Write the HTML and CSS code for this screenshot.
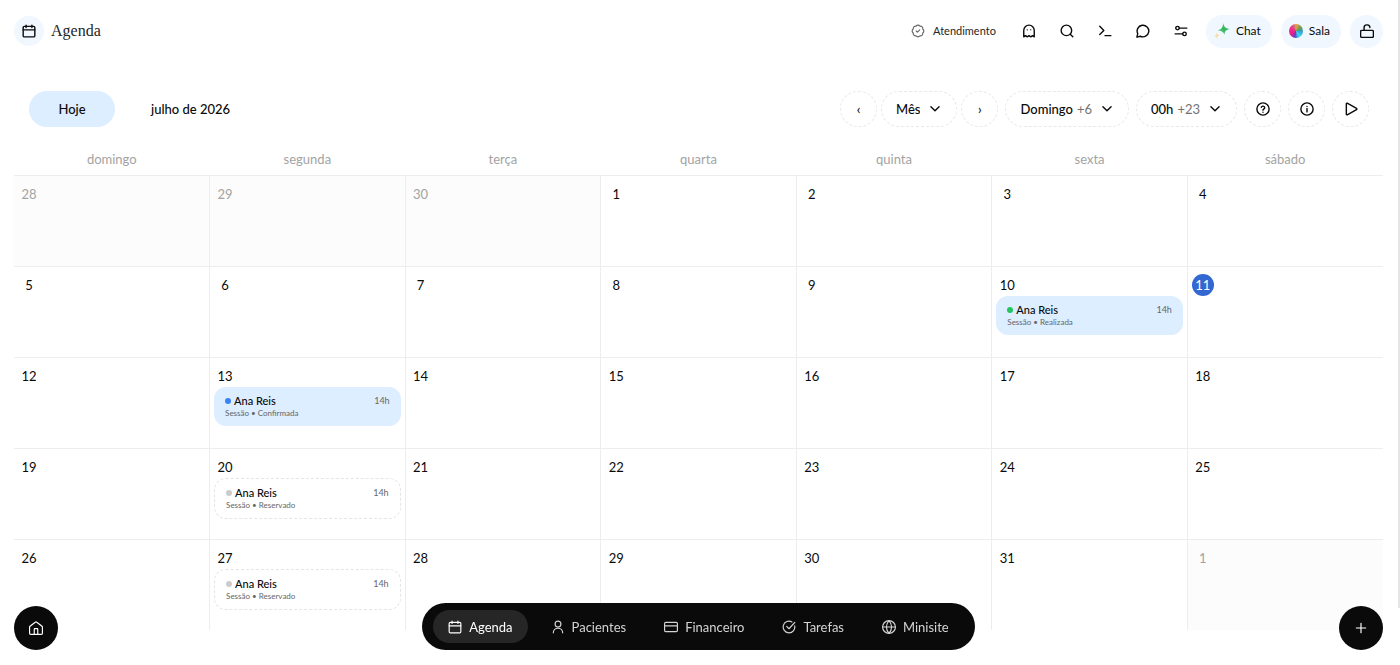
FILE: index.html
```html
<!DOCTYPE html>
<html lang="pt-BR">
<head>
    <meta charset="utf-8">
    <meta name="viewport" content="width=device-width, initial-scale=1">
    <title>Agenda</title>
    <link rel="stylesheet" href="styles.css">
</head>

<body>
<!-- shared icons -->
<svg class="sprite" aria-hidden="true">
    <symbol id="i-calendar" viewBox="0 0 24 24"><rect x="2" y="4" width="20" height="18" rx="2"/><path d="M7 2v4M17 2v4M2 10h20"/></symbol>
    <symbol id="i-down" viewBox="0 0 24 24"><path d="m5 8 7 7 7-7"/></symbol>
</svg>

<header class="topbar">
    <div class="brand">
        <span class="brand-icon"><svg class="icon"><use href="#i-calendar"/></svg></span>
        <h1>Agenda</h1>
    </div>
    <div class="actions">
        <a class="status" href="#">
            <svg class="icon" viewBox="0 0 24 24"><path d="M3.85 8.62a4 4 0 0 1 4.78-4.77 4 4 0 0 1 6.74 0 4 4 0 0 1 4.78 4.78 4 4 0 0 1 0 6.74 4 4 0 0 1-4.77 4.78 4 4 0 0 1-6.75 0 4 4 0 0 1-4.78-4.77 4 4 0 0 1 0-6.76Z"/><path d="m9 12 2 2 4-4"/></svg>
            Atendimento
        </a>
        <div class="tools">
            <button type="button" aria-label="Fantasma"><svg class="icon" viewBox="0 0 24 24"><path d="M9 10h.01M15 10h.01M12 2a9 9 0 0 0-9 9v11l3-2 3 2 3-2 3 2 3-2 3 2V11a9 9 0 0 0-9-9z"/></svg></button>
            <button type="button" aria-label="Buscar"><svg class="icon" viewBox="0 0 24 24"><circle cx="11" cy="11" r="9"/><path d="m22 22-4.500-4.500"/></svg></button>
            <button type="button" aria-label="Comandos"><svg class="icon" viewBox="0 0 24 24"><path d="m3 18 7-7-7-7M12 20h10"/></svg></button>
            <button type="button" aria-label="Mensagens"><svg class="icon" viewBox="0 0 24 24"><path d="M7.500 21A10 10 0 1 0 3 16.500L1.500 22.500Z"/></svg></button>
            <button type="button" aria-label="Ajustes"><svg class="icon" viewBox="0 0 24 24"><circle cx="6" cy="7" r="3"/><path d="M9 7h13M2 17h13"/><circle cx="18" cy="17" r="3"/></svg></button>
        </div>
        <div class="pills">
            <button type="button" class="pill">
                <svg class="spark" viewBox="0 0 24 24">
                    <defs><linearGradient id="leaf" x1="0" y1="1" x2="1" y2="0"><stop offset="0" stop-color="#7bd6a4"/><stop offset=".5" stop-color="#35b558"/><stop offset="1" stop-color="#5cc8b4"/></linearGradient></defs>
                    <path fill="url(#leaf)" d="M14 0c1 6 3 8 10 9-6 1-8 3-8 9-2-5-5-6-11-7 6-1 8-4 9-11z"/>
                    <path fill="#fbdca0" d="M4 14c0 3 2 4 5 4-3 1-4 2-4 6-1-3-2-4-5-4 3-1 4-3 4-6z"/>
                </svg>
                Chat
            </button>
            <button type="button" class="pill"><span class="orb"></span>Sala</button>
            <button type="button" class="pill lock" aria-label="Bloquear"><svg class="icon" viewBox="0 0 24 24"><rect x="1" y="11" width="22" height="12" rx="2"/><path d="M7 11V7a5 5 0 0 1 10-1"/></svg></button>
        </div>
    </div>
</header>

<main>
    <div class="toolbar">
        <button type="button" class="today-btn">Hoje</button>
        <h2>julho de 2026</h2>
        <div class="filters">
            <div class="period">
                <button type="button" class="round" aria-label="Anterior">‹</button>
                <label class="dropdown">
                    <select aria-label="Visualização"><option>Mês</option></select>
                    <svg class="icon"><use href="#i-down"/></svg>
                </label>
                <button type="button" class="round" aria-label="Próximo">›</button>
            </div>
            <label class="dropdown">
                <select aria-label="Dias"><option>Domingo</option></select>
                <span class="more">+6</span>
                <svg class="icon"><use href="#i-down"/></svg>
            </label>
            <label class="dropdown">
                <select aria-label="Horas"><option>00h</option></select>
                <span class="more">+23</span>
                <svg class="icon"><use href="#i-down"/></svg>
            </label>
            <button type="button" class="round" aria-label="Ajuda"><svg class="icon" viewBox="0 0 24 24"><circle cx="12" cy="12" r="10.500"/><path d="M9.100 9a3 3 0 0 1 5.800 1c0 2-3 2.500-3 4M12 17.500h.01"/></svg></button>
            <button type="button" class="round" aria-label="Informações"><svg class="icon" viewBox="0 0 24 24"><circle cx="12" cy="12" r="10.500"/><path d="M12 17v-6M12 7.500h.01"/></svg></button>
            <button type="button" class="round" aria-label="Iniciar"><svg class="icon" viewBox="0 0 24 24"><path d="M4 3v18a1 1 0 0 0 1.500.9l16-9a1 1 0 0 0 0-1.800l-16-9A1 1 0 0 0 4 3z"/></svg></button>
        </div>
    </div>

    <table class="calendar">
        <thead>
            <tr>
                <th>domingo</th><th>segunda</th><th>terça</th><th>quarta</th><th>quinta</th><th>sexta</th><th>sábado</th>
            </tr>
        </thead>
        <tbody>
            <tr>
                <td class="out"><span class="day">28</span></td>
                <td class="out"><span class="day">29</span></td>
                <td class="out"><span class="day">30</span></td>
                <td><span class="day">1</span></td>
                <td><span class="day">2</span></td>
                <td><span class="day">3</span></td>
                <td><span class="day">4</span></td>
            </tr>
            <tr>
                <td><span class="day">5</span></td>
                <td><span class="day">6</span></td>
                <td><span class="day">7</span></td>
                <td><span class="day">8</span></td>
                <td><span class="day">9</span></td>
                <td>
                    <span class="day">10</span>
                    <a class="event done" href="#">
                        <span class="row"><i class="dot"></i><b>Ana Reis</b><time>14h</time></span>
                        <small>Sessão • Realizada</small>
                    </a>
                </td>
                <td><span class="day today">11</span></td>
            </tr>
            <tr>
                <td><span class="day">12</span></td>
                <td>
                    <span class="day">13</span>
                    <a class="event confirmed" href="#">
                        <span class="row"><i class="dot"></i><b>Ana Reis</b><time>14h</time></span>
                        <small>Sessão • Confirmada</small>
                    </a>
                </td>
                <td><span class="day">14</span></td>
                <td><span class="day">15</span></td>
                <td><span class="day">16</span></td>
                <td><span class="day">17</span></td>
                <td><span class="day">18</span></td>
            </tr>
            <tr>
                <td><span class="day">19</span></td>
                <td>
                    <span class="day">20</span>
                    <a class="event reserved" href="#">
                        <span class="row"><i class="dot"></i><b>Ana Reis</b><time>14h</time></span>
                        <small>Sessão • Reservado</small>
                    </a>
                </td>
                <td><span class="day">21</span></td>
                <td><span class="day">22</span></td>
                <td><span class="day">23</span></td>
                <td><span class="day">24</span></td>
                <td><span class="day">25</span></td>
            </tr>
            <tr>
                <td><span class="day">26</span></td>
                <td>
                    <span class="day">27</span>
                    <a class="event reserved" href="#">
                        <span class="row"><i class="dot"></i><b>Ana Reis</b><time>14h</time></span>
                        <small>Sessão • Reservado</small>
                    </a>
                </td>
                <td><span class="day">28</span></td>
                <td><span class="day">29</span></td>
                <td><span class="day">30</span></td>
                <td><span class="day">31</span></td>
                <td class="out"><span class="day">1</span></td>
            </tr>
        </tbody>
    </table>
</main>

<div class="dock">
    <a class="fab" href="#" aria-label="Início"><svg class="icon" viewBox="0 0 24 24"><path d="M15 22v-8a1 1 0 0 0-1-1h-4a1 1 0 0 0-1 1v8"/><path d="M1 10.500a2 2 0 0 1 .7-1.500l9-7a2 2 0 0 1 2.600 0l9 7a2 2 0 0 1 .7 1.500V21a2 2 0 0 1-2 2H3a2 2 0 0 1-2-2z"/></svg></a>
    <nav>
        <a class="active" href="#"><svg class="icon"><use href="#i-calendar"/></svg>Agenda</a>
        <a href="#"><svg class="icon" viewBox="0 0 24 24"><circle cx="12" cy="7" r="5"/><path d="M20 22a8 8 0 0 0-16 0"/></svg>Pacientes</a>
        <a href="#"><svg class="icon" viewBox="0 0 24 24"><rect x="1" y="4" width="22" height="16" rx="2"/><path d="M1 10h22"/></svg>Financeiro</a>
        <a href="#"><svg class="icon" viewBox="0 0 24 24"><path d="M21.800 10A10 10 0 1 1 17 3.300"/><path d="m8 11 4 4L22 4"/></svg>Tarefas</a>
        <a href="#"><svg class="icon" viewBox="0 0 24 24"><circle cx="12" cy="12" r="11"/><path d="M12 1a16 16 0 0 0 0 22 16 16 0 0 0 0-22M1 12h22"/></svg>Minisite</a>
    </nav>
    <button type="button" class="fab" aria-label="Adicionar"><svg class="icon" viewBox="0 0 24 24"><path d="M4 12h16M12 4v16"/></svg></button>
</div>
<div class="scroll-thumb"></div>
</body>
</html>
```
FILE: styles.css
```css
* {
    box-sizing: border-box;
}

body {
    margin: 0;
    background: #fff;
    color: #0a0a0a;
    font-family: Lato, "Open Sans", sans-serif;
    font-size: 13px;
    line-height: 16px;
}

a {
    color: inherit;
    text-decoration: none;
}

button, select {
    margin: 0;
    padding: 0;
    border: 0;
    background: none;
    color: inherit;
    font: inherit;
    cursor: pointer;
}

.sprite {
    display: none;
}

.icon {
    flex: none;
    width: 14px;
    height: 14px;
    fill: none;
    stroke: currentColor;
    stroke-width: 2.4;
    stroke-linecap: round;
    stroke-linejoin: round;
}

/* top bar */
.topbar {
    display: flex;
    align-items: center;
    justify-content: space-between;
    height: 62px;
    padding: 0 17px 0 14px;
}

.brand {
    display: flex;
    align-items: center;
    gap: 7px;
}

.brand-icon {
    display: grid;
    place-items: center;
    width: 30px;
    height: 30px;
    border-radius: 50%;
    background: #f0f7ff;
}

h1 {
    margin: 0;
    font: 16px/24px "Liberation Serif", serif;
    color: #262626;
}

.actions, .status, .tools, .pills {
    display: flex;
    align-items: center;
}

.status {
    gap: 8px;
    margin-right: 20px;
    font-size: 11px;
    color: #262626;
}

.status .icon {
    color: #666;
    stroke-width: 2;
}

.tools {
    gap: 12px;
    margin-right: 12px;
}

.tools button {
    display: grid;
    place-items: center;
    width: 26px;
    height: 32px;
}

.pills {
    gap: 9px;
}

.pill {
    display: flex;
    align-items: center;
    gap: 6px;
    height: 33px;
    padding: 0 11px 0 8px;
    border-radius: 17px;
    background: #f0f7ff;
    font-size: 12px;
}

.pill.lock {
    justify-content: center;
    width: 33px;
    padding: 0;
}

.spark {
    width: 16px;
    height: 16px;
}

.orb {
    width: 14px;
    height: 14px;
    border-radius: 50%;
    background: conic-gradient(#e8a04a, #5a9c5a 60deg, #39a0d8 100deg, #38e0e8 150deg, #5a3fd0 190deg, #e0208a 230deg, #f02a8a 290deg, #d8558a 330deg, #e8a04a);
}

/* calendar toolbar */
.toolbar {
    display: flex;
    align-items: center;
    padding: 29px 31px 0 29px;
}

.today-btn {
    width: 86px;
    height: 36px;
    border-radius: 18px;
    background: #dceeff;
    font-weight: 500;
}

h2 {
    margin: 0 auto 0 36px;
    font-size: 13px;
    font-weight: 500;
}

.filters {
    display: flex;
    gap: 7px;
}

.period {
    display: flex;
    gap: 4px;
}

.round, .dropdown {
    display: flex;
    align-items: center;
    justify-content: center;
    height: 36px;
    border: 1px dashed #e8e8e8;
    border-radius: 18px;
    font-weight: 500;
}

.round {
    width: 37px;
}

.dropdown {
    padding: 0 14px;
}

.dropdown select {
    appearance: none;
    field-sizing: content;
}

.dropdown .icon {
    margin-left: 8px;
}

.more {
    margin-left: 4px;
    color: #737373;
    font-weight: 400;
}

/* month grid */
.calendar {
    width: calc(100% - 31px);
    margin: 16px 17px 33px 14px;
    border-collapse: collapse;
    table-layout: fixed;
}

.calendar th {
    height: 32px;
    padding: 0;
    color: #a3a3a3;
    font-weight: 400;
}

.calendar td {
    height: 91px;
    padding: 7px 4px 0;
    border-top: 1px solid #ededed;
    border-left: 1px solid #ededed;
    vertical-align: top;
}

.calendar td:first-child {
    border-left: 0;
}

.calendar .out {
    background: #fcfcfc;
    color: #a3a3a3;
}

.day {
    display: grid;
    place-items: center;
    width: 22px;
    height: 22px;
    border-radius: 50%;
}

.day.today {
    background: #3367d1;
    color: #fff;
}

.event {
    display: block;
    padding: 7px 11px;
    border-radius: 12px;
    background: #dceeff;
}

.event .row {
    display: flex;
    align-items: center;
    line-height: 14px;
}

.event b {
    margin-left: 3px;
    font-size: 11px;
    font-weight: 500;
}

.event time {
    margin-left: auto;
    color: #666;
    font-size: 9px;
}

.event small {
    display: block;
    color: #666;
    font-size: 8px;
    line-height: 11px;
}

.dot {
    width: 6px;
    height: 6px;
    border-radius: 50%;
}

.done .dot {
    background: #22c55e;
}

.confirmed .dot {
    background: #3b82f6;
}

.reserved .dot {
    background: #ccc;
}

.event.reserved {
    border: 1px dashed #e5e5e5;
    background: #fff;
}

/* floating navigation */
.dock {
    position: fixed;
    left: 14px;
    right: 17px;
    bottom: 15px;
    display: flex;
    align-items: flex-end;
    justify-content: space-between;
}

.fab {
    display: grid;
    place-items: center;
    width: 44px;
    height: 44px;
    border-radius: 50%;
    background: #0a0a0a;
    color: #fff;
}

.fab .icon {
    stroke-width: 2;
}

nav {
    display: flex;
    gap: 8px;
    padding: 7px 11px;
    border-radius: 24px;
    background: #0a0a0a;
    color: #d4d4d4;
}

nav a {
    display: flex;
    align-items: center;
    gap: 7px;
    height: 33px;
    padding: 0 15px;
    border-radius: 17px;
}

nav .active {
    background: #262626;
    color: #fff;
}

nav .icon {
    stroke-width: 2;
}

.scroll-thumb {
    position: fixed;
    top: 0;
    right: 0;
    width: 2px;
    height: 608px;
    background: #e5e5e5;
}
```
